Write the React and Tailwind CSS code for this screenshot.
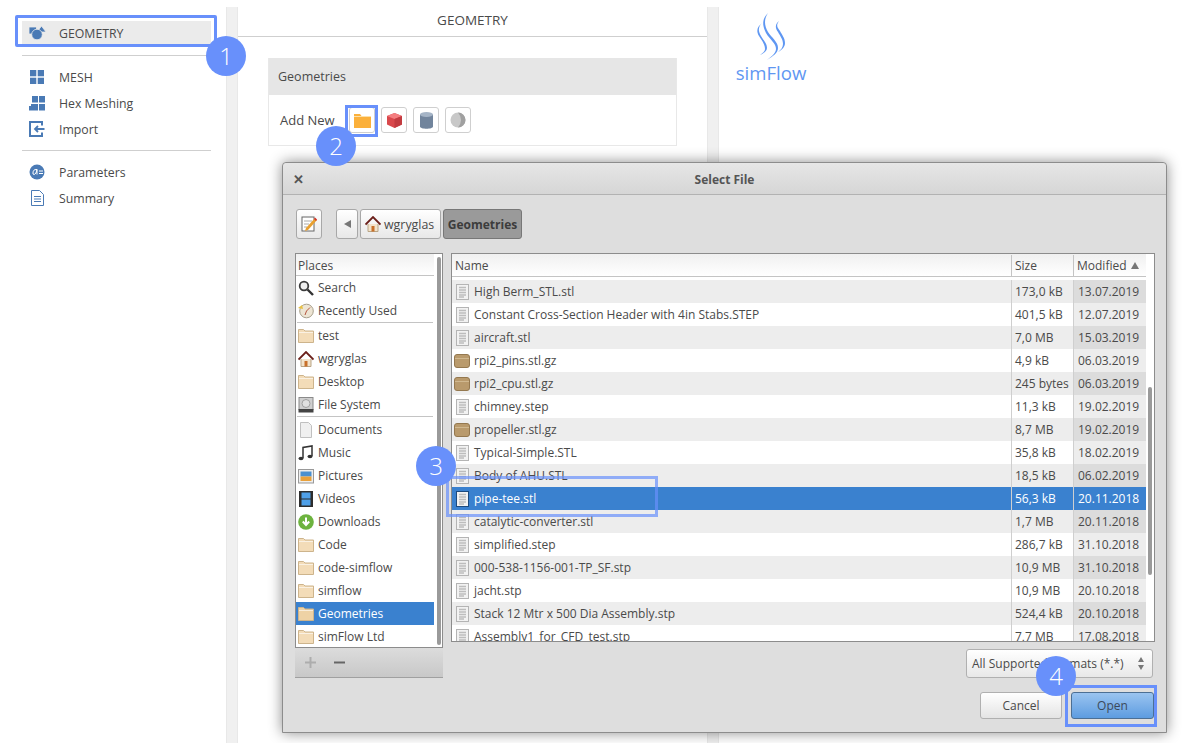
import React from "react";

const files = [
  ["High Berm_STL.stl", "173,0 kB", "13.07.2019", "doc"],
  ["Constant Cross-Section Header with 4in Stabs.STEP", "401,5 kB", "12.07.2019", "doc"],
  ["aircraft.stl", "7,0 MB", "15.03.2019", "doc"],
  ["rpi2_pins.stl.gz", "4,9 kB", "06.03.2019", "box"],
  ["rpi2_cpu.stl.gz", "245 bytes", "06.03.2019", "box"],
  ["chimney.step", "11,3 kB", "19.02.2019", "doc"],
  ["propeller.stl.gz", "8,7 MB", "19.02.2019", "box"],
  ["Typical-Simple.STL", "35,8 kB", "18.02.2019", "doc"],
  ["Body of AHU.STL", "18,5 kB", "06.02.2019", "doc"],
  ["pipe-tee.stl", "56,3 kB", "20.11.2018", "doc"],
  ["catalytic-converter.stl", "1,7 MB", "20.11.2018", "doc"],
  ["simplified.step", "286,7 kB", "31.10.2018", "doc"],
  ["000-538-1156-001-TP_SF.stp", "10,9 MB", "31.10.2018", "doc"],
  ["jacht.stp", "10,9 MB", "20.10.2018", "doc"],
  ["Stack 12 Mtr x 500 Dia Assembly.stp", "524,4 kB", "20.10.2018", "doc"],
  ["Assembly1_for_CFD_test.stp", "7,7 MB", "17.08.2018", "doc"],
];

const DocIcon = ({ selected }) => (
  <svg width="13" height="16" viewBox="0 0 13 16" className="shrink-0">
    <rect x="0.5" y="0.5" width="12" height="15" fill="#f2f2f2" stroke={selected ? "#1c4a7e" : "#b4b4b4"} />
    <path d="M3 3.500h7M3 6h7M3 8.500h7M3 11h7M3 13h5" stroke="#bdbdbd" strokeWidth="1.500" />
  </svg>
);

const BoxIcon = () => (
  <svg width="16" height="14" viewBox="0 0 16 14" className="shrink-0">
    <path d="M0.5 3q0-2.500 2.500-2.500h10q2.500 0 2.500 2.500v8q0 2.500-2.500 2.500h-10q-2.500 0-2.500-2.500z" fill="#b99a6c" stroke="#94784f" />
    <path d="M1 4.500h14" stroke="#d0b88f" />
  </svg>
);

const FolderIcon = ({ open }) => (
  <svg width="16" height="15" viewBox="0 0 16 15" className="shrink-0">
    <path d="M0.500 14.500v-13h5l1.500 1.500h8.500v11.500z" fill={open ? "#eed2a5" : "#f3dcb8"} stroke="#cdb48c" />
    <path d="M1 4.500h14" stroke="#fff" strokeOpacity="0.6" />
  </svg>
);

const HomeIcon = () => (
  <svg width="16" height="16" viewBox="0 0 16 16" className="shrink-0">
    <path d="M3 8v7.500h10V8" fill="#f2e3cb" stroke="#b9a586" />
    <path d="M0.500 8.500 8 1l7.500 7.500" fill="none" stroke="#6b1f1a" strokeWidth="1.800" />
    <rect x="6.500" y="10" width="3" height="5.500" fill="#c8702a" />
  </svg>
);

const SearchIcon = () => (
  <svg width="16" height="16" viewBox="0 0 16 16" className="shrink-0">
    <circle cx="6" cy="6" r="4.300" fill="#eee" stroke="#3c3c3c" strokeWidth="1.800" />
    <path d="M9.500 9.500 15 15" stroke="#333" strokeWidth="2.400" />
  </svg>
);

const ClockIcon = () => (
  <svg width="16" height="16" viewBox="0 0 16 16" className="shrink-0">
    <circle cx="8.500" cy="8" r="6.800" fill="#ede5d4" stroke="#a8a08c" />
    <path d="M8.500 8 12 4.500M8.500 8 7 12" stroke="#b5533c" />
    <path d="M0 5l4-3 1 4z" fill="#e8c040" />
  </svg>
);

const DriveIcon = () => (
  <svg width="16" height="16" viewBox="0 0 16 16" className="shrink-0">
    <rect x="1" y="0.500" width="14" height="12" fill="#cfcfcf" stroke="#8a8a8a" />
    <circle cx="8" cy="6.500" r="4" fill="#e0e0e0" stroke="#a0a0a0" />
    <rect x="0.500" y="12" width="15" height="3.500" fill="#444" />
  </svg>
);

const PageIcon = () => (
  <svg width="16" height="16" viewBox="0 0 16 16" className="shrink-0">
    <path d="M2.500 0.500h8l3 3v12h-11z" fill="#f0f0f0" stroke="#c0c0c0" />
  </svg>
);

const MusicIcon = () => (
  <svg width="16" height="16" viewBox="0 0 16 16" className="shrink-0">
    <path d="M5 13V2.500l9-1.500v10" fill="none" stroke="#333" strokeWidth="1.500" />
    <ellipse cx="3" cy="13.500" rx="2.500" ry="1.800" fill="#333" />
    <ellipse cx="12" cy="11.500" rx="2.500" ry="1.800" fill="#333" />
  </svg>
);

const PictureIcon = () => (
  <svg width="16" height="16" viewBox="0 0 16 16" className="shrink-0">
    <rect x="0.500" y="1.500" width="15" height="13.500" fill="#eee" stroke="#999" />
    <rect x="2.500" y="3.500" width="11" height="5" fill="#4a90d0" />
    <rect x="2.500" y="8.500" width="11" height="4.500" fill="#e9a13b" />
  </svg>
);

const VideoIcon = () => (
  <svg width="16" height="16" viewBox="0 0 16 16" className="shrink-0">
    <rect width="14" height="16" x="1" fill="#2d2d2d" />
    <rect x="3.500" y="1.500" width="9" height="6" fill="#4fa0e8" />
    <rect x="3.500" y="8.500" width="9" height="6" fill="#4fa0e8" />
  </svg>
);

const DownloadIcon = () => (
  <svg width="16" height="16" viewBox="0 0 16 16" className="shrink-0">
    <circle cx="8" cy="8" r="7.800" fill="#6db33f" />
    <path d="M8 3.500v6M4.800 7.500 8 11l3.200-3.500" fill="none" stroke="#fff" strokeWidth="2" />
  </svg>
);

const SideRow = ({ icon, label, active }) => (
  <div className={`flex items-center ${active ? "h-[24px] bg-[#ebebeb]" : "h-[26px]"}`}>
    <div className="w-[37px] flex justify-center pr-[7px] shrink-0">{icon}</div>
    <span className={active ? "pt-[3px]" : "pt-[2px]"}>{label}</span>
  </div>
);

const PlaceRow = ({ icon, label, active }) => (
  <div className={`h-[23px] flex items-center gap-[4px] pl-[2px] ${active ? "bg-[#3a81cf] text-white" : ""}`}>
    {icon}
    <span>{label}</span>
  </div>
);

const Badge = ({ n, className }) => (
  <div className={`absolute w-[40px] h-[40px] rounded-full bg-[#6890fb] text-white text-[24px] font-light flex items-center justify-center ${className}`}>
    {n}
  </div>
);

const ToolBtn = ({ children }) => (
  <div className="w-[26px] h-[26px] rounded-[3px] border border-[#cfcfcf] bg-white flex items-center justify-center">
    {children}
  </div>
);

export default function App() {
  return (
    <div className="relative w-[1187px] h-[743px] overflow-hidden bg-white flex text-[#4a4a4a] font-['Open_Sans',sans-serif] text-[12px]">
      {/* left menu */}
      <div className="w-[226px] shrink-0 pt-[21px] pl-[22px] pr-[15px] text-[12.300px]">
        <SideRow
          active
          label="GEOMETRY"
          icon={
            <svg width="17" height="14" viewBox="0 0 17 14" fill="#4a7ab5" stroke="#ebebeb" strokeWidth="0.800">
              <path d="M0 1h7.500v7h-7.500z" />
              <path d="M12.500 0l4.500 6h-9z" />
              <circle cx="8" cy="8.500" r="5.300" />
            </svg>
          }
        />
        <div className="h-px bg-[#cfcfcf] mt-[10px] mb-[8px]" />
        <SideRow
          label="MESH"
          icon={
            <svg width="14" height="14" viewBox="0 0 14 14" fill="#4a7ab5">
              <rect width="6.300" height="6.300" />
              <rect x="7.700" width="6.300" height="6.300" />
              <rect y="7.700" width="6.300" height="6.300" />
              <rect x="7.700" y="7.700" width="6.300" height="6.300" />
            </svg>
          }
        />
        <SideRow
          label="Hex Meshing"
          icon={
            <svg width="16" height="15" viewBox="0 0 16 15" fill="#4a7ab5">
              <path d="M3 0h6v6.500h-6zM10 0h6v6.500h-6zM10 8h6v6.500h-6zM2 8h7v6.500h-9v-4.500h2z" />
            </svg>
          }
        />
        <SideRow
          label="Import"
          icon={
            <svg width="16" height="16" viewBox="0 0 16 16" fill="none" stroke="#4a7ab5">
              <path d="M13 4.500V1H1v14h12v-3.500" strokeWidth="2" />
              <path d="M15.500 8H6M9 5 6 8l3 3" strokeWidth="1.800" />
            </svg>
          }
        />
        <div className="h-px bg-[#cfcfcf] mt-[8px] mb-[8px]" />
        <SideRow
          label="Parameters"
          icon={
            <svg width="16" height="16" viewBox="0 0 16 16">
              <circle cx="8" cy="8" r="7.500" fill="#4a7ab5" />
              <path d="M8 5.500Q3.500 5 4 10q1 1.500 3-1l1-3.500v5" fill="none" stroke="#fff" />
              <path d="M10 7h4M10 9.500h4" stroke="#fff" />
            </svg>
          }
        />
        <SideRow
          label="Summary"
          icon={
            <svg width="13" height="16" viewBox="0 0 13 16" fill="none" stroke="#4a7ab5">
              <path d="M0.500 0.500h8l4 4v11h-12z" />
              <path d="M3 6.500h7M3 9h7M3 11.500h7" />
            </svg>
          }
        />
      </div>

      <div className="w-[12px] shrink-0 mt-[7px] bg-[#f0f0f0] border-x border-[#e8e8e8]" />

      {/* geometry panel */}
      <div className="w-[469px] shrink-0 text-[12.500px]">
        <div className="h-[37px] pt-[5px] border-b border-[#cfcfcf] flex items-center justify-center text-[13.500px]">GEOMETRY</div>
        <div className="mt-[21px] ml-[30px] w-[409px] border border-[#e8e8e8] border-t-0">
          <div className="h-[37px] bg-[#e6e6e6] flex items-center pl-[9px] pt-px">Geometries</div>
          <div className="h-[50px] flex items-center pl-[11px]">
            <span className="w-[69px] text-[13px] pt-px">Add New</span>
            <div className="flex gap-[6px]">
              <ToolBtn>
                <svg width="17" height="15" viewBox="0 0 17 15">
                  <path d="M0 1h6l1.500 2H17v12H0z" fill="#fbb03b" />
                  <path d="M0 3.500h17" stroke="#fde0a8" />
                </svg>
              </ToolBtn>
              <ToolBtn>
                <svg width="15" height="15" viewBox="0 0 15 15">
                  <path d="M7.500 0 15 3v8.500L7.500 15 0 11.500V3z" fill="#d9484c" />
                  <path d="M7.500 0 15 3 7.500 6 0 3z" fill="#f47e80" />
                  <path d="M7.500 6 15 3v8.500L7.500 15z" fill="#c23b40" />
                </svg>
              </ToolBtn>
              <ToolBtn>
                <svg width="13" height="17" viewBox="0 0 13 17">
                  <path d="M0 2.500v12c0 3 13 3 13 0v-12z" fill="#71849c" />
                  <ellipse cx="6.500" cy="2.500" rx="6.500" ry="2.500" fill="#a5b4c6" />
                </svg>
              </ToolBtn>
              <ToolBtn>
                <svg width="16" height="16" viewBox="0 0 16 16">
                  <circle cx="8" cy="8" r="7.500" fill="#c8c8c8" />
                  <path d="M8 .5a7.500 7.500 0 0 1 0 15q3-3.500 3-7.500t-3-7.500z" fill="#a0a0a0" />
                </svg>
              </ToolBtn>
            </div>
          </div>
        </div>
      </div>

      <div className="w-[12px] shrink-0 mt-[7px] bg-[#f0f0f0] border-x border-[#e8e8e8]" />

      {/* logo */}
      <div className="flex-1 pl-[16px] pt-[12px]">
        <div className="w-[72px] flex flex-col items-center">
          <svg width="32" height="49" viewBox="0 0 32 49" fill="#5f97f2">
            <path d="M13 1C7 7 7 13 11 21C15 28 21 31 21 37C21 41 16 45 12 48C18 44 23 41 23 36C23 30 17 26 13 20C9 13 9 7 13 1Z" />
            <path d="M7 11C2 15 1 19 4 24C7 29 10 32 10 37C10 39 8 41 5 43C9 41 12 39 12 36C12 31 8 28 6 24C3 19 3 15 7 11Z" />
            <path d="M24 9C20 12 20 16 23 20C25 24 28 27 28 32C28 35 26 38 23 40C27 38 30 35 30 31C30 26 27 23 25 19C22 15 21 13 24 9Z" />
          </svg>
          <span className="text-[18.600px] leading-[24px] text-[#5f97f2] font-medium">simFlow</span>
        </div>
      </div>

      {/* file dialog */}
      <div className="absolute left-[282px] top-[162px] w-[885px] h-[571px] bg-[#dedede] border border-[#8c8c8c] rounded-t-[4px] shadow-[0_0_14px_rgba(0,0,0,0.45)] flex flex-col">
        <div className="h-[32px] shrink-0 pt-[2px] flex items-center justify-center relative border-b border-[#b2b2b2] bg-gradient-to-b from-[#e6e6e6] to-[#d6d6d6] rounded-t-[4px]">
          <span className="absolute left-[10px] top-[7px] text-[13px] font-bold text-[#555]">✕</span>
          <span className="font-bold text-[#555]">Select File</span>
        </div>

        <div className="flex items-center pl-[13px] pt-[14px] h-[44px] shrink-0">
          <div className="w-[26px] h-[30px] rounded-[3px] border border-[#a8a8a8] bg-gradient-to-b from-white to-[#e8e8e8] flex items-center justify-center">
            <svg width="16" height="16" viewBox="0 0 16 16">
              <rect x="1" y="1" width="12" height="14" fill="#fff" stroke="#666" />
              <path d="M3 5h8M3 8h5M3 11h3" stroke="#aaa" />
              <path d="M5 12 14 2l2 2-9 10-3 1z" fill="#e8a030" />
              <path d="M13 3l1-1.500 2 2-1 1.500z" fill="#d03030" />
            </svg>
          </div>
          <div className="w-[22px] h-[30px] ml-[14px] rounded-[3px] border border-[#a8a8a8] bg-gradient-to-b from-white to-[#e8e8e8] flex items-center justify-center">
            <span className="w-0 h-0 border-y-[4px] border-y-transparent border-r-[7px] border-r-[#777]" />
          </div>
          <div className="h-[30px] w-[81px] ml-[2px] rounded-[3px] border border-[#a8a8a8] bg-gradient-to-b from-white to-[#e8e8e8] flex items-center gap-[3px] pl-[4px] text-[12.400px]">
            <HomeIcon />
            <span className="pt-[2px]">wgryglas</span>
          </div>
          <div className="h-[30px] w-[79px] ml-[2px] pt-[2px] rounded-[3px] border border-[#777] bg-[#9a9a9a] font-bold text-[#3c3c3c] flex items-center justify-center">
            Geometries
          </div>
        </div>

        <div className="flex pt-[14px] pl-[12px] gap-[8px]">
          {/* places */}
          <div className="w-[148px] shrink-0">
            <div className="relative h-[395px] border border-[#8c8c8c] bg-white overflow-hidden">
              <div className="h-[22px] pt-[2px] flex items-center pl-[2px] border-b border-[#c4c4c4] bg-gradient-to-b from-[#f0f0f0] to-white mr-[8px]">Places</div>
              <div className="mr-[8px]">
                <PlaceRow icon={<SearchIcon />} label="Search" />
                <PlaceRow icon={<ClockIcon />} label="Recently Used" />
                <div className="h-px bg-[#c4c4c4] mb-px mx-[1px]" />
                <PlaceRow icon={<FolderIcon />} label="test" />
                <PlaceRow icon={<HomeIcon />} label="wgryglas" />
                <PlaceRow icon={<FolderIcon />} label="Desktop" />
                <PlaceRow icon={<DriveIcon />} label="File System" />
                <div className="h-px bg-[#c4c4c4] mb-px mx-[1px]" />
                <PlaceRow icon={<PageIcon />} label="Documents" />
                <PlaceRow icon={<MusicIcon />} label="Music" />
                <PlaceRow icon={<PictureIcon />} label="Pictures" />
                <PlaceRow icon={<VideoIcon />} label="Videos" />
                <PlaceRow icon={<DownloadIcon />} label="Downloads" />
                <PlaceRow icon={<FolderIcon />} label="Code" />
                <PlaceRow icon={<FolderIcon />} label="code-simflow" />
                <PlaceRow icon={<FolderIcon />} label="simflow" />
                <PlaceRow active icon={<FolderIcon open />} label="Geometries" />
                <PlaceRow icon={<FolderIcon />} label="simFlow Ltd" />
              </div>
              <div className="absolute right-[1px] top-[3px] bottom-[2px] w-[4px] rounded-full bg-[#9a9a9a]" />
            </div>
            <div className="h-[30px] border-b border-[#a0a0a0] bg-gradient-to-b from-[#dcdcdc] to-[#c8c8c8] flex items-center pl-[10px] gap-[18px] text-[#9c9c9c]">
              <svg width="11" height="11" viewBox="0 0 11 11"><path d="M5.500 0v11M0 5.500h11" stroke="#adadad" strokeWidth="2" /></svg>
              <svg width="11" height="11" viewBox="0 0 11 11"><path d="M0 5.500h11" stroke="#666" strokeWidth="2" /></svg>
            </div>
          </div>

          {/* files */}
          <div className="w-[704px] shrink-0">
            <div className="relative h-[389px] border border-[#8c8c8c] bg-white overflow-hidden">
              <div className="w-[694px] h-[23px] pt-px flex border-b border-[#c4c4c4] bg-gradient-to-b from-[#f0f0f0] to-white">
                <div className="w-[560px] pl-[3px] flex items-center border-r border-[#c4c4c4]">Name</div>
                <div className="w-[62px] pl-[3px] flex items-center border-r border-[#c4c4c4]">Size</div>
                <div className="flex-1 pl-[3px] flex items-center justify-between pr-[7px]">
                  <span>Modified</span>
                  <span className="w-0 h-0 border-x-[4px] border-x-transparent border-b-[7px] border-b-[#777]" />
                </div>
              </div>
              <div className="w-[694px] pt-[3px]">
                {files.map(([name, size, date, kind], i) => {
                  const selected = name === "pipe-tee.stl";
                  const even = i % 2 === 0;
                  return (
                    <div key={name} className={`h-[23px] flex ${selected ? "bg-[#3a81cf] text-white" : even ? "bg-[#ededed]" : "bg-white"}`}>
                      <div className="w-[560px] pl-[2px] flex items-center border-r border-[#cfcfcf] relative">
                        <div className="w-[16px] flex justify-center">
                          {kind === "doc" ? <DocIcon selected={selected} /> : <BoxIcon />}
                        </div>
                        <span className="ml-[4px] whitespace-nowrap">{name}</span>
                      </div>
                      <div className="w-[62px] pl-[3px] flex items-center border-r border-[#cfcfcf] whitespace-nowrap">{size}</div>
                      <div className={`flex-1 pl-[4px] flex items-center whitespace-nowrap ${selected ? "" : even ? "bg-[#dcdcdc]" : "bg-[#ededed]"}`}>{date}</div>
                    </div>
                  );
                })}
              </div>
              <div className="absolute right-[2px] top-[133px] w-[4px] h-[188px] rounded-full bg-[#9a9a9a]" />
            </div>

            <div className="flex justify-end mt-[7px] pr-[2px]">
              <div className="w-[187px] h-[29px] rounded-[3px] border border-[#b0b0b0] bg-gradient-to-b from-white to-[#e8e8e8] flex items-center justify-between pl-[5px] pr-[8px]">
                <span>All Supported Formats (*.*)</span>
                <span className="flex flex-col gap-[3px]">
                  <span className="w-0 h-0 border-x-[3px] border-x-transparent border-b-[5px] border-b-[#777]" />
                  <span className="w-0 h-0 border-x-[3px] border-x-transparent border-t-[5px] border-t-[#777]" />
                </span>
              </div>
            </div>
            <div className="flex justify-end gap-[9px] mt-[14px] pr-[1px]">
              <div className="w-[82px] h-[27px] rounded-[3px] border border-[#b0b0b0] bg-gradient-to-b from-white to-[#e4e4e4] flex items-center justify-center">Cancel</div>
              <div className="w-[83px] h-[27px] rounded-[3px] border border-[#4c6f94] bg-gradient-to-b from-[#9ac4f0] to-[#5d9ce0] flex items-center justify-center text-[#3c4a5a]">Open</div>
            </div>
          </div>
        </div>
      </div>

      {/* numbered callouts */}
      <div className="absolute left-[15px] top-[15px] w-[202px] h-[32px] rounded-[2px] border-[3px] border-[#6890fb]" />
      <div className="absolute left-[345px] top-[105px] w-[33px] h-[32px] border-[3px] border-[#6890fb]" />
      <div className="absolute left-[446px] top-[476px] w-[212px] h-[41px] border-[3px] border-[#6890fb]/70" />
      <div className="absolute left-[1065px] top-[685px] w-[92px] h-[42px] border-[3px] border-[#6890fb]" />
      <Badge n="1" className="left-[206px] top-[36px]" />
      <Badge n="2" className="left-[316px] top-[126px]" />
      <Badge n="3" className="left-[416px] top-[446px]" />
      <Badge n="4" className="left-[1036px] top-[656px]" />
    </div>
  );
}
